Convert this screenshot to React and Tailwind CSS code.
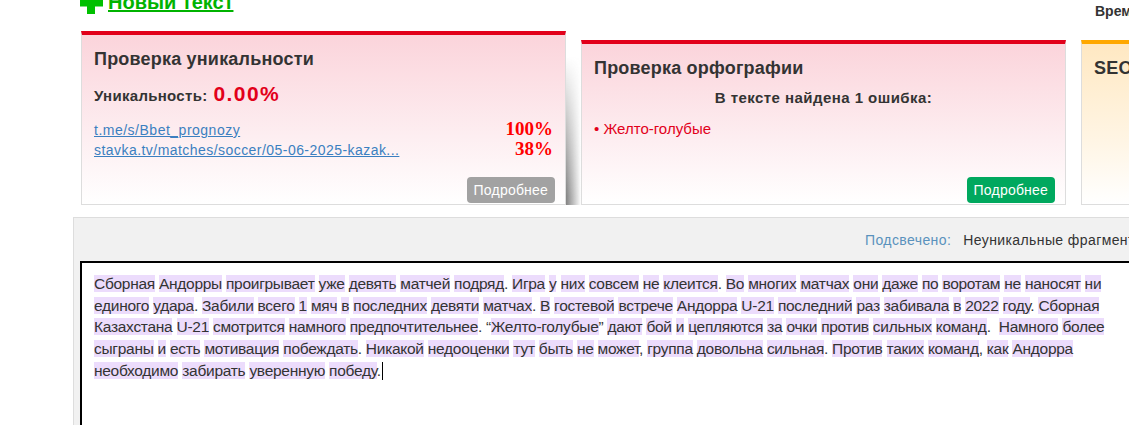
import React from "react";

const lines = [
  "Сборная Андорры проигрывает уже девять матчей подряд. Игра у них совсем не клеится. Во многих матчах они даже по воротам не наносят ни",
  "единого удара. Забили всего 1 мяч в последних девяти матчах. В гостевой встрече Андорра U-21 последний раз забивала в 2022 году. Сборная",
  "Казахстана U-21 смотрится намного предпочтительнее. “Желто-голубые” дают бой и цепляются за очки против сильных команд.  Намного более",
  "сыграны и есть мотивация побеждать. Никакой недооценки тут быть не может, группа довольна сильная. Против таких команд, как Андорра",
  "необходимо забирать уверенную победу.",
];

// wrap every word in a highlight, leave spaces and punctuation plain
const Highlighted = ({ text }) =>
  text.split(/([0-9A-Za-zА-Яа-яЁё-]+)/).map((part, i) =>
    i % 2 ? (
      <span key={i} className="bg-[#ecdcfc]">
        {part}
      </span>
    ) : (
      part
    )
  );

const Button = ({ color, children }) => (
  <div className="mt-auto flex justify-end pr-[10px] pb-[1px]">
    <span
      className={`h-[26px] rounded-[4px] px-[7px] text-[14px] leading-[26px] tracking-[0.2px] text-white ${color}`}
    >
      {children}
    </span>
  </div>
);

const App = () => {
  return (
    <div className="relative h-[425px] w-[1129px] overflow-hidden bg-white font-['Liberation_Sans',Arial,sans-serif] text-[#333]">
      {/* top line */}
      <div className="flex h-[31px] items-start whitespace-nowrap">
        <div className="w-[1095px] shrink-0">
          <a className="-mt-[13px] ml-[80px] flex w-max items-center gap-[5px] text-[20px] font-bold text-[#00b300] underline">
            <svg width="23" height="23" viewBox="0 0 23 23">
              <rect x="7" y="0" width="8" height="23" fill="#00c000" />
              <rect x="0" y="7.5" width="23" height="8" fill="#00c000" />
            </svg>
            Новый текст
          </a>
        </div>
        <div className="pt-[1px] text-[14px] font-bold text-[#333]">Время проверки</div>
      </div>

      {/* result cards */}
      <div className="flex h-[174px] items-end pl-[81px]">
        <div className="flex h-[174px] w-[485px] shrink-0 flex-col border-x border-b border-t-4 border-[#dddddd] border-t-[#e2001a] bg-gradient-to-b from-[#fbd4db] via-[#fdeef1] via-60% to-white">
          <div className="px-[12px] pt-[14px]">
            <div className="text-[18px] font-bold leading-[20px] tracking-[0.2px]">Проверка уникальности</div>
            <div className="mt-[13px] flex items-baseline gap-[6px] leading-[24px]">
              <span className="text-[15px] font-bold tracking-[0.3px]">Уникальность:</span>
              <span className="text-[21px] font-bold tracking-[1.4px] text-[#e2001a]">0.00%</span>
            </div>
            <div className="mt-[11px] text-[14px] leading-[19px]">
              <div className="flex items-baseline justify-between">
                <span className="tracking-[0.5px] text-[#3b7fc0] underline">t.me/s/Bbet_prognozy</span>
                <span className="font-['Liberation_Serif',serif] text-[19px] font-bold text-[#ff0000]">100%</span>
              </div>
              <div className="-mt-[1px] flex items-baseline justify-between">
                <span className="tracking-[0.45px] text-[#3b7fc0] underline">
                  stavka.tv/matches/soccer/05-06-2025-kazak...
                </span>
                <span className="font-['Liberation_Serif',serif] text-[19px] font-bold text-[#ff0000]">38%</span>
              </div>
            </div>
          </div>
          <Button color="bg-[#a2a2a2]">Подробнее</Button>
        </div>

        <div className="h-[165px] w-[15px] shrink-0 bg-[linear-gradient(to_right,rgba(100,100,100,0.8),rgba(255,255,255,0))] [mask-image:linear-gradient(to_bottom,transparent_10%,black_95%)]" />

        <div className="flex h-[165px] w-[485px] shrink-0 flex-col border-x border-b border-t-4 border-[#dddddd] border-t-[#e2001a] bg-gradient-to-b from-[#fbd4db] via-[#fdeef1] via-60% to-white">
          <div className="px-[12px] pt-[14px]">
            <div className="text-[18px] font-bold leading-[20px] tracking-[0.2px]">Проверка орфографии</div>
            <div className="mt-[10px] text-center text-[15px] font-bold leading-[20px] tracking-[0.45px]">
              В тексте найдена 1 ошибка:
            </div>
            <div className="mt-[11px] text-[15px] leading-[19px] text-[#e2001a]">• Желто-голубые</div>
          </div>
          <Button color="bg-[#00a85e]">Подробнее</Button>
        </div>

        <div className="w-[15px] shrink-0" />

        <div className="flex h-[165px] min-w-0 flex-1 flex-col border-l border-b border-t-4 border-[#dddddd] border-t-[#ffa800] bg-gradient-to-b from-[#ffe8c2] via-[#fff5e4] via-60% to-white">
          <div className="whitespace-nowrap px-[12px] pt-[14px]">
            <div className="text-[18px] font-bold leading-[20px] tracking-[0.2px]">SEO-анализ текста</div>
          </div>
        </div>
      </div>

      {/* highlighted text panel */}
      <div className="mt-[12px] ml-[73px] h-[220px] border-l border-t border-[#dddddd] bg-[#f1f1f1] pt-[13px]">
        <div className="flex h-[19px] items-center whitespace-nowrap pl-[791px] text-[14px] leading-[19px] tracking-[0.4px]">
          <span className="text-[#5a92bd]">Подсвечено:</span>
          <span className="ml-[6px] mr-[6px] h-[13px] w-[12px] bg-[#ecdcfc]" />
          <span>Неуникальные фрагменты</span>
        </div>
        <div className="mt-[11px] ml-[6px] h-[200px] border-2 border-r-0 border-black bg-white pl-[12px] pt-[10px] text-[15.5px] leading-[21.7px] tracking-[-0.28px] text-[#333]">
          {lines.map((line, i) => (
            <div key={i} className="whitespace-pre">
              <Highlighted text={line} />
              {i === lines.length - 1 && (
                <span className="ml-[1px] inline-block h-[18px] w-[1px] bg-black align-[-4px]" />
              )}
            </div>
          ))}
        </div>
      </div>
    </div>
  );
};

export default App;
